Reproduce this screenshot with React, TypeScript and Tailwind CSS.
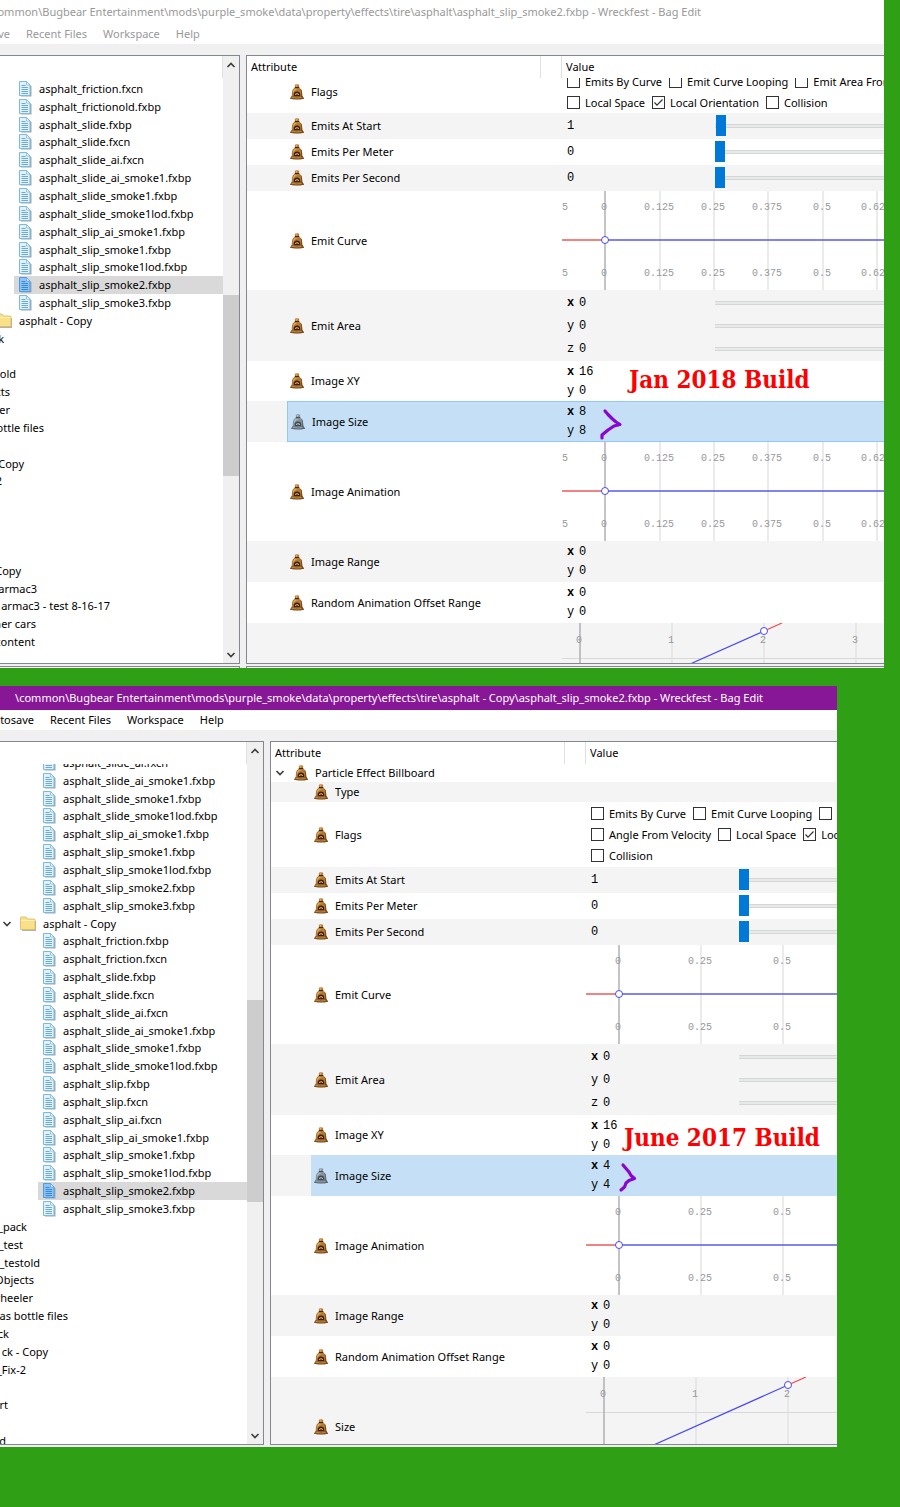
import { useId } from "react";
import type { ReactNode } from "react";
import clsx from "clsx";

type TreeItem =
  | { kind: "file"; name: string; selected?: boolean }
  | { kind: "folder"; name: string; open?: boolean }
  // entries scrolled past the left edge, `end` is where the name stops
  | { kind: "cut"; name: string; end: number };

const file = (name: string, selected = false): TreeItem => ({
  kind: "file",
  name,
  selected,
});
const cut = (name: string, end: number): TreeItem => ({
  kind: "cut",
  name,
  end,
});

const JAN_TREE: TreeItem[] = [
  file("asphalt_friction.fxcn"),
  file("asphalt_frictionold.fxbp"),
  file("asphalt_slide.fxbp"),
  file("asphalt_slide.fxcn"),
  file("asphalt_slide_ai.fxcn"),
  file("asphalt_slide_ai_smoke1.fxbp"),
  file("asphalt_slide_smoke1.fxbp"),
  file("asphalt_slide_smoke1lod.fxbp"),
  file("asphalt_slip_ai_smoke1.fxbp"),
  file("asphalt_slip_smoke1.fxbp"),
  file("asphalt_slip_smoke1lod.fxbp"),
  file("asphalt_slip_smoke2.fxbp", true),
  file("asphalt_slip_smoke3.fxbp"),
  { kind: "folder", name: "asphalt - Copy" },
  cut("k", 4),
  cut("", 0),
  cut("old", 16),
  cut("cts", 10),
  cut("er", 10),
  cut("ottle files", 44),
  cut("", 0),
  cut("Copy", 24),
  cut("2", 2),
  cut("", 0),
  cut("", 0),
  cut("", 0),
  cut("", 0),
  cut("Copy", 21),
  cut("armac3", 37),
  cut("armac3 - test 8-16-17", 110),
  cut("her cars", 36),
  cut("content", 35),
];

const JUNE_TREE: TreeItem[] = [
  file("asphalt_slide_ai.fxcn"),
  file("asphalt_slide_ai_smoke1.fxbp"),
  file("asphalt_slide_smoke1.fxbp"),
  file("asphalt_slide_smoke1lod.fxbp"),
  file("asphalt_slip_ai_smoke1.fxbp"),
  file("asphalt_slip_smoke1.fxbp"),
  file("asphalt_slip_smoke1lod.fxbp"),
  file("asphalt_slip_smoke2.fxbp"),
  file("asphalt_slip_smoke3.fxbp"),
  { kind: "folder", name: "asphalt - Copy", open: true },
  file("asphalt_friction.fxbp"),
  file("asphalt_friction.fxcn"),
  file("asphalt_slide.fxbp"),
  file("asphalt_slide.fxcn"),
  file("asphalt_slide_ai.fxcn"),
  file("asphalt_slide_ai_smoke1.fxbp"),
  file("asphalt_slide_smoke1.fxbp"),
  file("asphalt_slide_smoke1lod.fxbp"),
  file("asphalt_slip.fxbp"),
  file("asphalt_slip.fxcn"),
  file("asphalt_slip_ai.fxcn"),
  file("asphalt_slip_ai_smoke1.fxbp"),
  file("asphalt_slip_smoke1.fxbp"),
  file("asphalt_slip_smoke1lod.fxbp"),
  file("asphalt_slip_smoke2.fxbp", true),
  file("asphalt_slip_smoke3.fxbp"),
  cut("_pack", 27),
  cut("_test", 23),
  cut("_testold", 40),
  cut("Objects", 34),
  cut("wheeler", 33),
  cut("as bottle files", 68),
  cut("ck", 9),
  cut("ck - Copy", 48),
  cut("_Fix-2", 26),
  cut("", 0),
  cut("rt", 8),
  cut("", 0),
  cut("d", 6),
];

function FileIcon({ selected }: { selected?: boolean }) {
  return (
    <svg className="h-4 w-[13px] shrink-0" viewBox="0 0 13 16">
      <path d="M2 2h7l3.500 3.500v10H2z" fill="#a4a8ad" />
      <path
        d="M.5 .5h7l3.500 3.500v10.500H.5z"
        fill={selected ? "#8cc4f8" : "#e2f2fc"}
        stroke={selected ? "#4f9be0" : "#7ab9e2"}
      />
      <path
        d="M7.500 .5v3.500h3.500z"
        fill="#f5fbff"
        stroke={selected ? "#4f9be0" : "#6fb1dd"}
        strokeWidth=".7"
      />
      <path
        d="M2.500 4.500h4M2.500 6.500h6.500M2.500 8.500h6.500M2.500 10.500h6.500M2.500 12.500h6.500"
        stroke={selected ? "#3b86d3" : "#6ba9d6"}
      />
    </svg>
  );
}

function FolderIcon() {
  return (
    <svg className="h-4 w-4 shrink-0" viewBox="0 0 16 16">
      <path d="M2 3h6l1.500 2H16v10H2z" fill="#b3b3ab" />
      <path
        d="M.5 2Q.5 1 1.500 1h4.500l1.500 2h6.500q1 0 1 1v9.500H.5z"
        fill="#fbe08a"
        stroke="#dcb95a"
        strokeWidth=".8"
      />
      <path d="M1 4.500h13.500" stroke="#fff0b8" />
    </svg>
  );
}

function BagIcon({ selected }: { selected?: boolean }) {
  const body = selected ? "#84909b" : "#b07a35";
  const light = selected ? "#b4bec6" : "#dcaa5c";
  const shade = selected ? "#5c6873" : "#7d4c1a";
  const dark = selected ? "#3e4853" : "#3d1d0a";
  return (
    <svg className="h-4 w-[14px] shrink-0" viewBox="0 0 14 16">
      <path
        d="M4.800 .8Q7-.4 9.200 .8L9 3.500Q11.800 4.800 12 7.500L12.300 12L14 14.800Q7 15.800 0 14.800L1.700 12L2 7.500Q2.200 4.800 5 3.500z"
        fill={body}
      />
      <path
        d="M10.500 4.800Q12 6 12 8L12.300 12L14 14.800Q12 15.200 10 15.300Q12 11 10.500 4.800z"
        fill={shade}
      />
      <path d="M5.500 1h2L7 2.800H6zM4.500 5Q2.800 6 2.900 9.500L4.500 7Q5.500 5.500 8 5z" fill={light} />
      <path d="M4.800 3.500h4.500" stroke={dark} strokeWidth=".9" />
      <path d="M3.800 12.200V10Q4 7.500 7 7.500T10.200 10V12.200z" fill={dark} />
      <path d="M5 10.200Q7 8 9 10.200V11H5z" fill={light} />
      <path d="M6.200 9.800h1.600v1.200H6.200z" fill={shade} />
      <path
        d="M1.500 12.300Q7 13.700 12.500 12.300L14 14.800Q7 16 0 14.800z"
        fill={shade}
      />
      <path
        d="M1.500 13.300Q7 14.600 11.500 13.500"
        stroke={light}
        strokeWidth=".7"
        fill="none"
      />
    </svg>
  );
}

function Chevron({ up }: { up?: boolean }) {
  return (
    <svg className="h-[6px] w-[10px] shrink-0" viewBox="0 0 10 6">
      <path
        d={up ? "M1.500 5L5 1.500L8.500 5" : "M1.500 1L5 4.500L8.500 1"}
        fill="none"
        stroke="#404040"
        strokeWidth="1.700"
      />
    </svg>
  );
}

function ScrollBar({ parts }: { parts: [number, number, number] }) {
  return (
    <div className="flex w-4 flex-col bg-[#f0f0f0]">
      <button
        type="button"
        aria-label="Scroll up"
        className="flex h-[17px] items-center justify-center"
      >
        <Chevron up />
      </button>
      <div style={{ flexGrow: parts[0] }} />
      <div className="bg-[#cdcdcd]" style={{ flexGrow: parts[1] }} />
      <div style={{ flexGrow: parts[2] }} />
      <button
        type="button"
        aria-label="Scroll down"
        className="flex h-[17px] items-center justify-center"
      >
        <Chevron />
      </button>
    </div>
  );
}

function TreeRow({ item, indent }: { item: TreeItem; indent: number }) {
  if (item.kind === "cut") {
    return (
      <li
        className="flex flex-1 items-center justify-end whitespace-nowrap"
        style={{ width: item.end }}
      >
        {item.name}
      </li>
    );
  }
  if (item.kind === "folder") {
    return (
      <li
        className="flex flex-1 items-center whitespace-nowrap"
        style={{ marginLeft: indent - 36 }}
      >
        <span className="w-[18px]">{item.open && <Chevron />}</span>
        <FolderIcon />
        <span className="pl-[7px]">{item.name}</span>
      </li>
    );
  }
  return (
    <li
      className={clsx(
        "flex flex-1 items-center gap-[7px] pl-[5px] whitespace-nowrap",
        item.selected && "bg-[#d9d9d9]",
      )}
      style={{ marginLeft: indent }}
    >
      <FileIcon selected={item.selected} />
      {item.name}
    </li>
  );
}

function Tree({
  items,
  indent,
  offset,
}: {
  items: TreeItem[];
  indent: number;
  offset: string;
}) {
  return (
    <div className="flex min-w-0 flex-1 flex-col">
      <div className="h-[22px] border-r border-[#e0e0e0]" />
      <div className="flex flex-1 flex-col overflow-hidden">
        <ul className={clsx("flex flex-1 flex-col", offset)}>
          {items.map((item, i) => (
            <TreeRow key={i} item={item} indent={indent} />
          ))}
        </ul>
      </div>
    </div>
  );
}

function Slider({
  label,
  value,
  bare,
}: {
  label: string;
  value: number;
  bare?: boolean;
}) {
  return (
    <input
      type="range"
      aria-label={label}
      min={0}
      max={255}
      defaultValue={value}
      className={clsx(
        "h-[21px] min-w-0 flex-1 appearance-none bg-transparent",
        "[&::-webkit-slider-runnable-track]:h-[4px] [&::-webkit-slider-runnable-track]:border-y [&::-webkit-slider-runnable-track]:border-[#d6d6d6] [&::-webkit-slider-runnable-track]:bg-[#e7eaea]",
        "[&::-webkit-slider-thumb]:-mt-[10px] [&::-webkit-slider-thumb]:h-[21px] [&::-webkit-slider-thumb]:w-[10px] [&::-webkit-slider-thumb]:appearance-none [&::-webkit-slider-thumb]:bg-[#0078d7]",
        bare && "[&::-webkit-slider-thumb]:opacity-0",
      )}
    />
  );
}

function NumberSlider({ label, value }: { label: string; value: number }) {
  return (
    <div className="flex h-[26px] items-center pl-[5px] font-['Liberation_Mono',monospace] text-[12px]">
      <span className="w-[148px]">{value}</span>
      <Slider label={label} value={value} />
    </div>
  );
}

function Vector({
  label,
  values,
  sliders,
}: {
  label: string;
  values: number[];
  sliders?: boolean;
}) {
  return (
    <div className="pl-[5px] font-['Liberation_Mono',monospace] text-[12px]">
      {values.map((value, i) => (
        <div
          key={i}
          className={clsx("flex items-center", sliders ? "h-[23px]" : "h-[19px]")}
        >
          <span className={clsx("w-[12px]", i === 0 && "font-bold")}>
            {"xyz"[i]}
          </span>
          <span className="w-[136px]">{value}</span>
          {sliders && <Slider label={`${label} ${"xyz"[i]}`} value={0} bare />}
        </div>
      ))}
    </div>
  );
}

function Flag({ name, checked }: { name: string; checked?: boolean }) {
  const id = useId();
  return (
    <span className="flex shrink-0 items-center gap-[5px]">
      <span className="relative flex">
        <input
          id={id}
          type="checkbox"
          defaultChecked={checked}
          className="peer h-[13px] w-[13px] appearance-none border border-[#333] bg-white"
        />
        <svg
          className="pointer-events-none absolute inset-0 hidden peer-checked:block"
          viewBox="0 0 13 13"
        >
          <path
            d="M2.500 6.500L5 9.200L10.500 3.500"
            fill="none"
            stroke="#333"
            strokeWidth="1.200"
          />
        </svg>
      </span>
      <label htmlFor={id}>{name}</label>
    </span>
  );
}

function Flags({ lines }: { lines: string[][] }) {
  return (
    <div className="pl-[5px] whitespace-nowrap">
      {lines.map((line, i) => (
        <div key={i} className="flex h-[21px] items-center gap-[7px]">
          {line.map((name) => (
            <Flag key={name} name={name} checked={name === "Local Orientation"} />
          ))}
        </div>
      ))}
    </div>
  );
}

type Tick = [x: number, label: string];

const JAN_TICKS: Tick[] = [
  [-11, "-0.125"],
  [43, "0"],
  [98, "0.125"],
  [152, "0.25"],
  [206, "0.375"],
  [261, "0.5"],
  [315, "0.625"],
];
const JUNE_TICKS: Tick[] = [
  [33, "0"],
  [115, "0.25"],
  [197, "0.5"],
  [279, "0.75"],
];
const SIZE_TICKS: Tick[] = [
  [18, "0"],
  [110, "1"],
  [202, "2"],
  [294, "3"],
];

function Ticks({ ticks, y }: { ticks: Tick[]; y: number[] }) {
  return (
    <>
      {ticks.map(([x, label]) => (
        <g key={label}>
          <path
            d={`M${x} 0V100`}
            stroke={label === "0" ? "#b0b0b4" : "#dededf"}
            strokeWidth={label === "0" ? 1.5 : 1.2}
          />
          {y.map((ty) => (
            <text key={ty} x={x - 1} y={ty} textAnchor="middle">
              {label}
            </text>
          ))}
        </g>
      ))}
    </>
  );
}

const CHART_CLASS =
  "block w-full fill-[#98989c] font-['Liberation_Mono',monospace] text-[10px]";

function FlatCurve({ ticks }: { ticks: Tick[] }) {
  const origin = ticks.find(([, label]) => label === "0")![0];
  return (
    <svg className={clsx(CHART_CLASS, "h-[99px]")}>
      <Ticks ticks={ticks} y={[19, 85]} />
      <path d={`M0 49H${origin}`} stroke="#ee5a5a" strokeWidth="1.500" />
      <path d={`M${origin} 49H2000`} stroke="#5a5ae6" strokeWidth="1.500" />
      <circle cx={origin} cy="49" r="3.500" fill="#fff" stroke="#4a4af0" />
    </svg>
  );
}

function SizeCurve() {
  return (
    <svg className={clsx(CHART_CLASS, "h-[100px]")}>
      <path d="M0 35.500H2000" stroke="#d8d8d8" />
      <Ticks ticks={SIZE_TICKS} y={[20]} />
      <path d="M-4 100L202 8" stroke="#4a4af5" strokeWidth="1.200" />
      <path d="M202 8L220 0" stroke="#f54a4a" strokeWidth="1.200" />
      <circle cx="202" cy="8" r="3.500" fill="#fff" stroke="#4a4af0" />
    </svg>
  );
}

type Row = {
  name: string;
  height: string;
  value?: ReactNode;
  selected?: boolean;
  root?: boolean;
};

// Rows from "Emits At Start" down are the same in both builds
const commonRows = (ticks: Tick[], imageSize: number): Row[] => [
  {
    name: "Emits At Start",
    height: "h-[26px]",
    value: <NumberSlider label="Emits At Start" value={1} />,
  },
  {
    name: "Emits Per Meter",
    height: "h-[26px]",
    value: <NumberSlider label="Emits Per Meter" value={0} />,
  },
  {
    name: "Emits Per Second",
    height: "h-[26px]",
    value: <NumberSlider label="Emits Per Second" value={0} />,
  },
  { name: "Emit Curve", height: "h-[99px]", value: <FlatCurve ticks={ticks} /> },
  {
    name: "Emit Area",
    height: "h-[71px]",
    value: <Vector label="Emit Area" values={[0, 0, 0]} sliders />,
  },
  {
    name: "Image XY",
    height: "h-[40px]",
    value: <Vector label="Image XY" values={[16, 0]} />,
  },
  {
    name: "Image Size",
    height: "h-[41px]",
    selected: true,
    value: <Vector label="Image Size" values={[imageSize, imageSize]} />,
  },
  {
    name: "Image Animation",
    height: "h-[99px]",
    value: <FlatCurve ticks={ticks} />,
  },
  {
    name: "Image Range",
    height: "h-[41px]",
    value: <Vector label="Image Range" values={[0, 0]} />,
  },
  {
    name: "Random Animation Offset Range",
    height: "h-[41px]",
    value: <Vector label="Random Animation Offset Range" values={[0, 0]} />,
  },
  { name: "Size", height: "h-[100px]", value: <SizeCurve /> },
];

const JAN_ROWS: Row[] = [
  {
    name: "Flags",
    height: "h-[42px]",
    value: (
      <Flags
        lines={[
          ["Emits By Curve", "Emit Curve Looping", "Emit Area From"],
          ["Local Space", "Local Orientation", "Collision"],
        ]}
      />
    ),
  },
  ...commonRows(JAN_TICKS, 8),
];

const JUNE_ROWS: Row[] = [
  { name: "Particle Effect Billboard", height: "h-[18px]", root: true },
  { name: "Type", height: "h-[20px]" },
  {
    name: "Flags",
    height: "h-[65px]",
    value: (
      <Flags
        lines={[
          ["Emits By Curve", "Emit Curve Looping", "Emit Area From"],
          ["Angle From Velocity", "Local Space", "Local Orientation"],
          ["Collision"],
        ]}
      />
    ),
  },
  ...commonRows(JUNE_TICKS, 4),
];

function Attributes({
  rows,
  offset,
  outlined,
}: {
  rows: Row[];
  offset: string;
  outlined?: boolean;
}) {
  return (
    <div className="min-w-0 flex-1 border-y border-l border-[#828790] bg-white">
      <div className="flex h-[22px] leading-[22px]">
        <span className="w-[294px] border-r border-[#e0e0e0] pl-1">
          Attribute
        </span>
        <span className="w-[21px] border-r border-[#e0e0e0]" />
        <span className="pl-1">Value</span>
      </div>
      <div className="overflow-hidden">
        <table
          className={clsx(
            "w-full table-fixed border-separate border-spacing-0",
            offset,
          )}
        >
          <colgroup>
            <col className="w-[40px]" />
            <col className="w-[275px]" />
            <col />
          </colgroup>
          <tbody>
            {rows.map((row, i) => {
              const cell = row.selected
                ? clsx(
                    "bg-[#c5e0f6]",
                    outlined ? "border-y border-[#90c8f6]" : "",
                  )
                : "";
              return (
                <tr
                  key={row.name}
                  className={clsx(row.height, i % 2 === 1 && "bg-[#f4f4f4]")}
                >
                  <td className="p-0">
                    {row.root && (
                      <span className="flex pl-1">
                        <Chevron />
                      </span>
                    )}
                  </td>
                  <th
                    scope="row"
                    className={clsx(
                      "p-0 text-left font-normal",
                      cell,
                      row.selected && outlined && "border-l",
                    )}
                  >
                    <span
                      className={clsx(
                        "flex items-center gap-[7px] whitespace-nowrap",
                        row.root ? "-ml-[17px]" : "pl-[3px]",
                      )}
                    >
                      <BagIcon selected={row.selected} />
                      {row.name}
                    </span>
                  </th>
                  <td className={clsx("overflow-hidden p-0", cell)}>
                    {row.value}
                  </td>
                </tr>
              );
            })}
          </tbody>
        </table>
      </div>
    </div>
  );
}

function MenuBar({ first, end }: { first: string; end: number }) {
  return (
    <nav className="flex h-5 items-center gap-4 overflow-hidden whitespace-nowrap">
      <button
        type="button"
        className="flex shrink-0 justify-end"
        style={{ width: end }}
      >
        {first}
      </button>
      <button type="button">Recent Files</button>
      <button type="button">Workspace</button>
      <button type="button">Help</button>
    </nav>
  );
}

export default function App() {
  return (
    <main className="min-h-screen overflow-hidden bg-[#2fa015] font-['Noto_Sans','Open_Sans',sans-serif] text-[11px] leading-4 text-black">
      <section className="relative mr-4 bg-white">
        <header className="flex h-6 w-[701px] items-center justify-end whitespace-nowrap text-[#999]">
          common\Bugbear
          Entertainment\mods\purple_smoke\data\property\effects\tire\asphalt\asphalt_slip_smoke2.fxbp
          - Wreckfest - Bag Edit
        </header>
        <div className="text-[#999]">
          <MenuBar first="Autosave" end={10} />
        </div>
        <div className="bg-[#f0f0f0] pt-[11px]">
          <div className="flex gap-[6px]">
            <div className="flex w-[240px] border-y border-r border-[#828790] bg-white">
              <Tree items={JAN_TREE} indent={14} offset="pt-[2px] pb-3" />
              <ScrollBar parts={[222, 180, 170]} />
            </div>
            <Attributes
              rows={JAN_ROWS}
              offset="-mt-[7px] -mb-[60px]"
              outlined
            />
          </div>
          <div className="flex gap-[6px] pt-[2px]">
            <div className="h-[2px] w-[240px] border-t border-r border-[#828790] bg-white" />
            <div className="h-[2px] flex-1 border-t border-l border-[#828790] bg-white" />
          </div>
        </div>

        <p className="absolute top-[365px] left-[629px] font-['DejaVu_Serif_Condensed','DejaVu_Serif',serif] text-[24px] leading-[30px] font-bold whitespace-nowrap text-[#fd0000]">
          Jan 2018 Build
        </p>
        <svg
          className="absolute top-[406px] left-[598px] h-[36px] w-[28px]"
          viewBox="0 0 28 36"
        >
          <path
            d="M7 5L10 8.500L14 12.500L18 16L22 18.500L16 20L10 24L4 29V32"
            fill="none"
            stroke="#8a05cd"
            strokeWidth="3.200"
            strokeLinecap="round"
            strokeLinejoin="round"
          />
        </svg>
      </section>

      <section className="relative mt-[18px] mr-[63px] bg-white">
        <header className="h-6 bg-[#881798] text-white">
          <div className="flex h-full w-[763px] items-center justify-end whitespace-nowrap">
            \common\Bugbear
            Entertainment\mods\purple_smoke\data\property\effects\tire\asphalt -
            Copy\asphalt_slip_smoke2.fxbp - Wreckfest - Bag Edit
          </div>
        </header>
        <MenuBar first="Autosave" end={34} />
        <div className="bg-[#f0f0f0] pt-[11px] pb-[2px]">
          <div className="flex gap-[6px]">
            <div className="flex w-[264px] border-y border-r border-[#828790] bg-white">
              <Tree items={JUNE_TREE} indent={38} offset="-mt-[10px] -mb-[6px]" />
              <ScrollBar parts={[241, 201, 225]} />
            </div>
            <Attributes rows={JUNE_ROWS} offset="-mb-[33px]" />
          </div>
        </div>

        <p className="absolute top-[437px] left-[624px] font-['DejaVu_Serif_Condensed','DejaVu_Serif',serif] text-[24px] leading-[30px] font-bold whitespace-nowrap text-[#fd0000]">
          June 2017 Build
        </p>
        <svg
          className="absolute top-[474px] left-[616px] h-[36px] w-[28px]"
          viewBox="0 0 28 36"
        >
          <path
            d="M7 5L10 8.500L13 12L15 15.500L18.500 18.500L13 20.500L10 23L8.500 27L5 30"
            fill="none"
            stroke="#8a05cd"
            strokeWidth="3.200"
            strokeLinecap="round"
            strokeLinejoin="round"
          />
        </svg>
      </section>
    </main>
  );
}
